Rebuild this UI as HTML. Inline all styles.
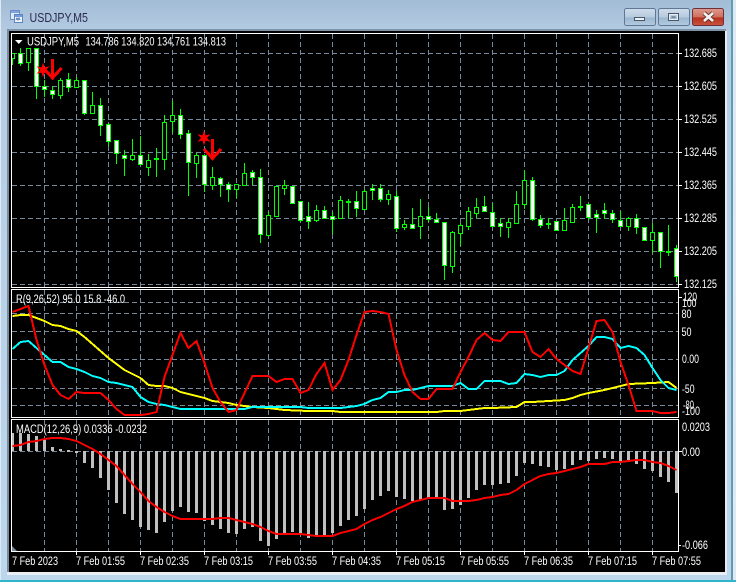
<!DOCTYPE html>
<html><head><meta charset="utf-8"><title>USDJPY,M5</title>
<style>html,body{margin:0;padding:0;background:#b9d2e9;overflow:hidden}svg{display:block}text{font-family:"Liberation Sans",sans-serif;font-size:11.5px;fill:#fff}</style></head>
<body>
<svg width="736" height="582" viewBox="0 0 736 582" xmlns="http://www.w3.org/2000/svg">
<defs>
<linearGradient id="bg" x1="0" y1="0" x2="0" y2="1"><stop offset="0" stop-color="#a3bcd5"/><stop offset=".06" stop-color="#b5cde4"/><stop offset="1" stop-color="#bcd6ee"/></linearGradient>
<linearGradient id="btn" x1="0" y1="0" x2="0" y2="1"><stop offset="0" stop-color="#cfdcea"/><stop offset=".5" stop-color="#b7cbdf"/><stop offset=".55" stop-color="#9db7d0"/><stop offset="1" stop-color="#b4cbe0"/></linearGradient>
<linearGradient id="cls" x1="0" y1="0" x2="0" y2="1"><stop offset="0" stop-color="#dd9c90"/><stop offset=".5" stop-color="#cf6f5f"/><stop offset=".55" stop-color="#b8301c"/><stop offset="1" stop-color="#c9543f"/></linearGradient>
<clipPath id="mc"><rect x="12" y="34" width="666" height="253"/></clipPath>
</defs>
<rect width="736" height="582" fill="url(#bg)"/>
<rect x="0" y="0" width="1" height="582" fill="#dfe9f3"/>
<rect x="733" y="0" width="3" height="582" fill="#dfe9f3"/>
<rect x="731" y="0" width="2" height="582" fill="#5d9fb0"/>
<rect x="7" y="29" width="719" height="2" fill="#7e93a8"/>
<rect x="7" y="29" width="2" height="543" fill="#7a8b99"/>
<rect x="725" y="31" width="2" height="541" fill="#e4ecf3"/>
<rect x="7" y="572" width="720" height="3" fill="#e8eef4"/>
<rect x="0" y="580" width="736" height="2" fill="#2fb6c8"/>
<rect x="9" y="31" width="716" height="541" fill="#000"/>

<!-- title icon -->
<g shape-rendering="crispEdges">
<rect x="10.500" y="10.500" width="9" height="9" fill="#dfeafa" stroke="#6f8fc4"/>
<rect x="11" y="11" width="8" height="2" fill="#7fa3dc"/>
<rect x="14.500" y="14.500" width="8" height="8" fill="#eef4fc" stroke="#5f86c2"/>
<rect x="15" y="15" width="7" height="2" fill="#6f9ade"/>
<path d="M16 20l1-2 1 2 1-2 1 2" fill="none" stroke="#4a6fa8"/>
</g>
<text x="29.500" y="22" textLength="58.500" lengthAdjust="spacingAndGlyphs" style="font-size:13px;fill:#2a2a50">USDJPY,M5</text>

<!-- window buttons -->
<rect x="624.500" y="8.500" width="31" height="17" rx="2" fill="url(#btn)" stroke="#5e7896"/>
<rect x="658.500" y="8.500" width="31" height="17" rx="2" fill="url(#btn)" stroke="#5e7896"/>
<rect x="692.500" y="8.500" width="31" height="17" rx="2" fill="url(#cls)" stroke="#70303a"/>
<rect x="634.500" y="17.500" width="10" height="3" fill="#eef2f6" stroke="#47586b"/>
<rect x="668.500" y="13.500" width="10" height="7" fill="none" stroke="#47586b" stroke-width="1"/>
<rect x="669.500" y="14.500" width="8" height="5" fill="none" stroke="#e8eef4" stroke-width="1"/>
<rect x="671.500" y="16.500" width="4" height="1" fill="#47586b"/>
<path d="M704 13l9 8M713 13l-9 8" stroke="#5a2a2a" stroke-width="4.500" fill="none"/>
<path d="M704 13l9 8M713 13l-9 8" stroke="#f4f0ee" stroke-width="2.800" fill="none"/>

<!-- grid -->
<g stroke="#778899" stroke-width="1" stroke-dasharray="5 3" fill="none" shape-rendering="crispEdges">
<path d="M12 53.500H678M12 86.500H678M12 119.500H678M12 152.500H678M12 185.500H678M12 218.500H678M12 251.500H678M12 284.500H678"/>
<path d="M12 302.500H678M12 313.500H678M12 331.500H678M12 359.500H678M12 388.500H678M12 405.500H678"/>
<path d="M12 451.500H678"/>
<path d="M44.500 34V287M76.500 34V287M108.500 34V287M140.500 34V287M172.500 34V287M204.500 34V287M236.500 34V287M268.500 34V287M300.500 34V287M332.500 34V287M364.500 34V287M396.500 34V287M428.500 34V287M460.500 34V287M492.500 34V287M524.500 34V287M556.500 34V287M588.500 34V287M620.500 34V287M652.500 34V287"/>
<path d="M44.500 290V417M76.500 290V417M108.500 290V417M140.500 290V417M172.500 290V417M204.500 290V417M236.500 290V417M268.500 290V417M300.500 290V417M332.500 290V417M364.500 290V417M396.500 290V417M428.500 290V417M460.500 290V417M492.500 290V417M524.500 290V417M556.500 290V417M588.500 290V417M620.500 290V417M652.500 290V417"/>
<path d="M44.500 420V551M76.500 420V551M108.500 420V551M140.500 420V551M172.500 420V551M204.500 420V551M236.500 420V551M268.500 420V551M300.500 420V551M332.500 420V551M364.500 420V551M396.500 420V551M428.500 420V551M460.500 420V551M492.500 420V551M524.500 420V551M556.500 420V551M588.500 420V551M620.500 420V551M652.500 420V551"/>
</g>

<!-- candles -->
<g clip-path="url(#mc)" shape-rendering="crispEdges">
<path fill="none" stroke="#00ff00" d="M12.500 53V65M20.500 48V66M28.500 48V71M36.500 48V99M44.500 80V97M52.500 86V99M60.500 78V99M68.500 73V92M76.500 77V87M84.500 80V115M92.500 92V114M100.500 98V136M108.500 123V146M116.500 140V164M124.500 150V176M132.500 139V161M140.500 136V164M148.500 154V176M156.500 148V177M164.500 115V170M172.500 101V133M180.500 109V139M188.500 130V196M196.500 153V178M204.500 155V192M212.500 167V190M220.500 177V197M228.500 182V202M236.500 184V198M244.500 163V185M252.500 170V185M260.500 169V243M268.500 212V235M276.500 186V216M284.500 180V195M292.500 186V204M300.500 201V222M308.500 202V229M316.500 205V222M324.500 206V218M332.500 212V234M340.500 196V219M348.500 199V218M356.500 191V217M364.500 189V209M372.500 184V200M380.500 184V202M388.500 190V205M396.500 191V232M404.500 220V230M412.500 208V228M420.500 199V239M428.500 207V222M436.500 213V223M444.500 222V280M452.500 231V273M460.500 223V246M468.500 207V230M476.500 198V218M484.500 196V212M492.500 203V226M500.500 218V237M508.500 218V238M516.500 191V223M524.500 170V209M532.500 177V221M540.500 215V228M548.500 218V229M556.500 221V230M564.500 208V231M572.500 204V222M580.500 196V211M588.500 204V220M596.500 210V233M604.500 203V219M612.500 210V223M620.500 211V226M628.500 217V231M636.500 214V234M644.500 227V240M652.500 223V253M660.500 232V268M668.500 225V256M676.500 245V282"/>
<path fill="#000" stroke="#00ff00" d="M10.500 53.500h4v5h-4zM26.500 48.500h4v14h-4zM58.500 80.500h4v15h-4zM74.500 80.500h4v7h-4zM90.500 105.500h4v8h-4zM130.500 155.500h4v4h-4zM146.500 160.500h4v7h-4zM162.500 122.500h4v37h-4zM170.500 115.500h4v6h-4zM194.500 155.500h4v8h-4zM210.500 177.500h4v8h-4zM234.500 184.500h4v5h-4zM242.500 173.500h4v12h-4zM266.500 215.500h4v20h-4zM274.500 186.500h4v30h-4zM282.500 185.500h4v3h-4zM314.500 210.500h4v10h-4zM338.500 200.500h4v18h-4zM362.500 191.500h4v18h-4zM386.500 194.500h4v5h-4zM402.500 224.500h4v3h-4zM418.500 216.500h4v10h-4zM450.500 232.500h4v34h-4zM458.500 225.500h4v8h-4zM466.500 211.500h4v15h-4zM474.500 207.500h4v6h-4zM506.500 222.500h4v5h-4zM514.500 204.500h4v19h-4zM522.500 180.500h4v24h-4zM562.500 220.500h4v10h-4zM570.500 207.500h4v15h-4zM626.500 218.500h4v8h-4zM650.500 232.500h4v8h-4z"/>
<path fill="#fff" stroke="#00ff00" d="M18.500 53.500h4v10h-4zM34.500 48.500h4v38h-4zM42.500 86.500h4v3h-4zM50.500 90.500h4v4h-4zM66.500 79.500h4v8h-4zM82.500 80.500h4v33h-4zM98.500 105.500h4v20h-4zM106.500 124.500h4v17h-4zM114.500 140.500h4v13h-4zM122.500 155.500h4v3h-4zM138.500 155.500h4v9h-4zM154.500 158.500h4v1h-4zM178.500 115.500h4v19h-4zM186.500 133.500h4v29h-4zM202.500 155.500h4v29h-4zM218.500 178.500h4v6h-4zM226.500 184.500h4v5h-4zM250.500 172.500h4v5h-4zM258.500 177.500h4v57h-4zM290.500 186.500h4v17h-4zM298.500 201.500h4v19h-4zM306.500 216.500h4v5h-4zM322.500 210.500h4v8h-4zM330.500 216.500h4v3h-4zM346.500 201.500h4v1h-4zM354.500 201.500h4v7h-4zM370.500 188.500h4v2h-4zM378.500 188.500h4v11h-4zM394.500 196.500h4v32h-4zM410.500 224.500h4v4h-4zM426.500 216.500h4v3h-4zM434.500 219.500h4v3h-4zM442.500 222.500h4v43h-4zM482.500 206.500h4v5h-4zM490.500 212.500h4v14h-4zM498.500 223.500h4v3h-4zM530.500 180.500h4v39h-4zM538.500 219.500h4v6h-4zM546.500 223.500h4v1h-4zM554.500 221.500h4v9h-4zM578.500 206.500h4v1h-4zM586.500 204.500h4v13h-4zM594.500 214.500h4v3h-4zM602.500 210.500h4v3h-4zM610.500 213.500h4v6h-4zM618.500 220.500h4v6h-4zM634.500 218.500h4v9h-4zM642.500 227.500h4v13h-4zM658.500 232.500h4v19h-4zM666.500 251.500h4v1h-4zM674.500 248.500h4v28h-4z"/>
</g>

<!-- arrows and stars -->
<g fill="none" stroke="#ff0000" stroke-width="3" shape-rendering="crispEdges">
<path d="M52.500 59V78M43.500 68L52.500 78L61.500 68"/>
<path d="M212.500 139V158M204 149L212.500 158.500L221 149"/>
</g>
<g fill="#ff0000">
<polygon points="43,62.500 44.500,67.400 49.500,66.200 46,70 49.500,73.800 44.500,72.600 43,77.500 41.500,72.600 36.500,73.800 40,70 36.500,66.200 41.500,67.400"/>
<polygon points="204,130.500 205.500,135.400 210.500,134.200 207,138 210.500,141.800 205.500,140.600 204,145.500 202.500,140.600 197.500,141.800 201,138 197.500,134.200 202.500,135.400"/>
</g>

<!-- RSI-like panel lines -->
<g fill="none" stroke-width="2" shape-rendering="crispEdges" transform="translate(.5 0)">
<polyline stroke="#ffff00" points="12,316 20,315 28,315 36,318 44,321 52,325 60,326 68,329 76,331 84,337 92,344 100,351 108,358 116,364 124,370 132,374 140,378 148,385 156,386 164,386 172,388 180,392 188,394 196,396 204,398 212,401 220,402 228,403 236,405 244,406 252,407 268,408 276,409 284,410 308,411 332,411 340,412 436,412 444,411 460,411 468,410 476,409 484,408 492,408 516,407 524,402 532,402 548,401 564,400 572,398 580,395 588,393 604,390 612,388 620,386 628,384 652,383 668,382 676,388"/>
<polyline stroke="#00ffff" points="12,349 20,342 28,341 36,348 44,355 52,362 60,362 68,367 76,369 84,372 92,376 100,378 108,382 116,383 124,385 132,387 140,397 148,402 156,404 164,405 172,407 180,409 244,409 252,407 284,407 300,407 308,408 340,408 348,407 356,406 364,404 372,400 380,398 388,392 396,392 404,390 412,390 420,388 428,386 444,386 452,386 460,383 468,389 476,389 484,381 500,381 508,384 516,383 524,374 532,375 540,377 548,375 556,375 564,371 572,360 580,353 588,346 596,337 604,337 612,339 620,348 628,346 636,348 644,355 652,368 660,380 668,388 676,390"/>
<polyline stroke="#ff0000" points="12,312 20,309 28,306 36,340 44,365 52,385 60,395 68,399 76,392 84,393 92,393 100,393 108,400 116,409 124,415 132,415 140,415 148,414 156,412 164,377 172,355 180,333 188,348 196,341 204,363 212,388 220,402 228,412 236,410 244,393 252,376 260,376 268,376 276,382 284,379 292,379 300,393 308,390 316,374 324,363 332,390 340,380 348,360 356,335 364,312 372,311 380,312 388,314 396,350 404,375 412,392 420,399 428,399 436,389 444,389 452,389 460,372 468,357 476,340 484,333 492,340 500,341 508,332 516,332 524,332 532,352 540,357 548,349 556,359 564,365 572,371 580,374 588,348 596,321 604,320 612,332 620,362 628,385 636,411 644,411 652,411 660,413 668,413 676,412"/>
</g>

<!-- MACD histogram -->
<path fill="none" stroke="#c0c0c0" stroke-width="3" shape-rendering="crispEdges" d="M12.500 451V433M20.500 451V433M28.500 451V434M36.500 451V436M44.500 451V440M52.500 451V447M60.500 451V449M68.500 452V450M76.500 451V453M84.500 451V463M92.500 451V468M100.500 451V478M108.500 451V490M116.500 451V503M124.500 451V514M132.500 451V520M140.500 451V527M148.500 451V530M156.500 451V533M164.500 451V522M172.500 451V511M180.500 451V507M188.500 451V512M196.500 451V513M204.500 451V521M212.500 451V525M220.500 451V529M228.500 451V533M236.500 451V534M244.500 451V529M252.500 451V527M260.500 451V541M268.500 451V546M276.500 451V539M284.500 451V534M292.500 451V532M300.500 451V534M308.500 451V538M316.500 451V535M324.500 451V535M332.500 451V533M340.500 451V526M348.500 451V520M356.500 451V516M364.500 451V509M372.500 451V500M380.500 451V496M388.500 451V491M396.500 451V497M404.500 451V499M412.500 451V501M420.500 451V500M428.500 451V499M436.500 451V497M444.500 451V510M452.500 451V509M460.500 451V505M468.500 451V498M476.500 451V490M484.500 451V485M492.500 451V485M500.500 451V484M508.500 451V483M516.500 451V476M524.500 451V463M532.500 451V464M540.500 451V466M548.500 451V467M556.500 451V470M564.500 451V469M572.500 451V465M580.500 451V460M588.500 451V461M596.500 451V459M604.500 451V458M612.500 451V459M620.500 451V461M628.500 451V461M636.500 451V464M644.500 451V469M652.500 451V471M660.500 451V477M668.500 451V482M676.500 451V493"/>
<polyline fill="none" stroke="#ff0000" stroke-width="2" shape-rendering="crispEdges" transform="translate(.5 0)" points="12,446 20,445 28,442 36,441 44,439 52,438 60,438 68,439 76,441 84,445 92,449 100,454 108,460 116,466 124,475 132,484 140,492 148,501 156,507 164,512 172,516 180,519 188,519 196,519 204,519 212,519 220,518 228,518 236,520 244,522 252,524 260,527 268,531 276,534 284,534 292,534 300,534 308,535 316,536 324,536 332,536 340,533 348,531 356,529 364,524 372,520 380,517 388,513 396,509 404,506 412,502 420,500 428,498 436,498 444,498 452,501 460,501 468,501 476,500 484,498 492,497 500,495 508,494 516,490 524,484 532,480 540,476 548,474 556,473 564,471 572,469 580,467 588,464 596,464 604,464 612,462 620,462 628,461 636,460 644,460 652,462 660,463 668,466 676,470"/>
<polygon points="12,546 17,551 12,551" fill="#778899"/>

<!-- borders and ticks -->
<g fill="none" stroke="#fff" stroke-width="1" shape-rendering="crispEdges">
<rect x="11.500" y="33.500" width="667" height="254"/>
<rect x="11.500" y="289.500" width="667" height="128"/>
<rect x="11.500" y="419.500" width="667" height="132"/>
<path d="M679 53.500h3M679 86.500h3M679 119.500h3M679 152.500h3M679 185.500h3M679 218.500h3M679 251.500h3M679 284.500h3M679 297.500h3M679 451.500h3M679 545.500h2"/>
<path d="M76.500 552v3M140.500 552v3M204.500 552v3M268.500 552v3M332.500 552v3M396.500 552v3M460.500 552v3M524.500 552v3M588.500 552v3M652.500 552v3"/>
</g>

<!-- headers -->
<polygon points="15,40 22.500,40 18.800,44" fill="#fff"/>
<text x="27" y="45.500" textLength="52" lengthAdjust="spacingAndGlyphs">USDJPY,M5</text>
<text x="85.500" y="45.500" textLength="140.500" lengthAdjust="spacingAndGlyphs">134.786 134.820 134.761 134.813</text>
<text x="16" y="303" textLength="109" lengthAdjust="spacingAndGlyphs">R(9,26,52) 95.0 15.8 -46.0</text>
<text x="16" y="433" textLength="131" lengthAdjust="spacingAndGlyphs">MACD(12,26,9) 0.0336 -0.0232</text>

<!-- price labels -->
<text x="684" y="57" textLength="33" lengthAdjust="spacingAndGlyphs">132.685</text>
<text x="684" y="90" textLength="33" lengthAdjust="spacingAndGlyphs">132.605</text>
<text x="684" y="123" textLength="33" lengthAdjust="spacingAndGlyphs">132.525</text>
<text x="684" y="156" textLength="33" lengthAdjust="spacingAndGlyphs">132.445</text>
<text x="684" y="189" textLength="33" lengthAdjust="spacingAndGlyphs">132.365</text>
<text x="684" y="222" textLength="33" lengthAdjust="spacingAndGlyphs">132.285</text>
<text x="684" y="255" textLength="33" lengthAdjust="spacingAndGlyphs">132.205</text>
<text x="684" y="288" textLength="33" lengthAdjust="spacingAndGlyphs">132.125</text>

<text x="683" y="301" textLength="14" lengthAdjust="spacingAndGlyphs">120</text>
<text x="682" y="307" textLength="14.500" lengthAdjust="spacingAndGlyphs">100</text>
<text x="681.500" y="318" textLength="10" lengthAdjust="spacingAndGlyphs">80</text>
<text x="681.500" y="336" textLength="10" lengthAdjust="spacingAndGlyphs">50</text>
<text x="682" y="363" textLength="17" lengthAdjust="spacingAndGlyphs">0.00</text>
<text x="682" y="393" textLength="12.500" lengthAdjust="spacingAndGlyphs">-50</text>
<text x="683" y="409" textLength="11" lengthAdjust="spacingAndGlyphs">-80</text>
<text x="682" y="415" textLength="18" lengthAdjust="spacingAndGlyphs">-100</text>
<text x="682" y="431" textLength="28" lengthAdjust="spacingAndGlyphs">0.0203</text>
<text x="682" y="456" textLength="18" lengthAdjust="spacingAndGlyphs">0.00</text>
<text x="682" y="549" textLength="26" lengthAdjust="spacingAndGlyphs">-0.066</text>

<!-- time labels -->
<text x="12" y="565" textLength="46" lengthAdjust="spacingAndGlyphs">7 Feb 2023</text>
<text x="76" y="565" textLength="49" lengthAdjust="spacingAndGlyphs">7 Feb 01:55</text>
<text x="140" y="565" textLength="49" lengthAdjust="spacingAndGlyphs">7 Feb 02:35</text>
<text x="204" y="565" textLength="49" lengthAdjust="spacingAndGlyphs">7 Feb 03:15</text>
<text x="268" y="565" textLength="49" lengthAdjust="spacingAndGlyphs">7 Feb 03:55</text>
<text x="332" y="565" textLength="49" lengthAdjust="spacingAndGlyphs">7 Feb 04:35</text>
<text x="396" y="565" textLength="49" lengthAdjust="spacingAndGlyphs">7 Feb 05:15</text>
<text x="460" y="565" textLength="49" lengthAdjust="spacingAndGlyphs">7 Feb 05:55</text>
<text x="524" y="565" textLength="49" lengthAdjust="spacingAndGlyphs">7 Feb 06:35</text>
<text x="588" y="565" textLength="49" lengthAdjust="spacingAndGlyphs">7 Feb 07:15</text>
<text x="652" y="565" textLength="49" lengthAdjust="spacingAndGlyphs">7 Feb 07:55</text>
</svg>
</body></html>
